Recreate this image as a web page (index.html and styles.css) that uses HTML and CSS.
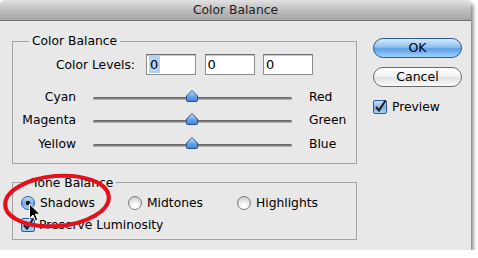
FILE: index.html
```html
<!DOCTYPE html>
<html lang="en">
<head>
  <meta charset="UTF-8">
  <title>Color Balance</title>
  <link rel="stylesheet" href="styles.css">
</head>
<body>
  <div class="window">
    <div class="titlebar">Color Balance</div>

    <div class="content">
      <div class="groups">
        <!-- Color Balance group -->
        <fieldset class="group balance">
          <legend>Color Balance</legend>
          <div class="levels">
            <span class="levels-label">Color Levels:</span>
            <span class="field"><span class="sel">0</span></span>
            <span class="field">0</span>
            <span class="field">0</span>
          </div>

          <div class="sliders">
            <div class="slider-row">
              <span class="slider-left">Cyan</span>
              <span class="track">
                <svg class="thumb" width="14" height="14" viewBox="0 0 14 14"><path d="M1.5 7 L7 1.5 L12.5 7 L12.5 11.5 Q12.5 12.5 11.5 12.5 L2.5 12.5 Q1.5 12.5 1.5 11.5 Z" fill="url(#thumbFill)" stroke="#24508f"/></svg>
              </span>
              <span class="slider-right">Red</span>
            </div>
            <div class="slider-row">
              <span class="slider-left">Magenta</span>
              <span class="track">
                <svg class="thumb" width="14" height="14" viewBox="0 0 14 14"><path d="M1.5 7 L7 1.5 L12.5 7 L12.5 11.5 Q12.5 12.5 11.5 12.5 L2.5 12.5 Q1.5 12.5 1.5 11.5 Z" fill="url(#thumbFill)" stroke="#24508f"/></svg>
              </span>
              <span class="slider-right">Green</span>
            </div>
            <div class="slider-row">
              <span class="slider-left">Yellow</span>
              <span class="track">
                <svg class="thumb" width="14" height="14" viewBox="0 0 14 14"><path d="M1.5 7 L7 1.5 L12.5 7 L12.5 11.5 Q12.5 12.5 11.5 12.5 L2.5 12.5 Q1.5 12.5 1.5 11.5 Z" fill="url(#thumbFill)" stroke="#24508f"/></svg>
              </span>
              <span class="slider-right">Blue</span>
            </div>
          </div>
        </fieldset>

        <!-- Tone Balance group -->
        <fieldset class="group tone">
          <legend>Tone Balance</legend>
          <div class="radios">
            <span class="radio-item"><span class="radio on"></span>Shadows</span>
            <span class="radio-item"><span class="radio"></span>Midtones</span>
            <span class="radio-item"><span class="radio"></span>Highlights</span>
          </div>
          <div class="check-row">
            <svg class="checkbox" width="14" height="14" viewBox="0 0 14 14"><rect x="0.5" y="0.5" width="13" height="13" rx="1.5" fill="url(#boxFill)" stroke="#2c5a96"/><path d="M3 7 L6 10.5 L12 1" fill="none" stroke="#1a1a1a" stroke-width="2"/></svg>
            <span>Preserve Luminosity</span>
          </div>
        </fieldset>
      </div>

      <div class="actions">
        <div class="btn ok">OK</div>
        <div class="btn cancel">Cancel</div>
        <div class="check-row preview">
          <svg class="checkbox" width="14" height="14" viewBox="0 0 14 14"><rect x="0.5" y="0.5" width="13" height="13" rx="1.5" fill="url(#boxFill)" stroke="#2c5a96"/><path d="M3 7 L6 10.5 L12.5 0.5" fill="none" stroke="#1a1a1a" stroke-width="2"/></svg>
          <span>Preview</span>
        </div>
      </div>
    </div>

    <!-- red annotation ring and pointer -->
    <svg class="ring" width="120" height="66" viewBox="0 0 120 66">
      <ellipse cx="57" cy="31" rx="52" ry="25" fill="none" stroke="#e6101c" stroke-width="4" transform="rotate(-5 57 31)"/>
    </svg>
    <svg class="cursor" width="14" height="20" viewBox="0 0 14 20">
      <path d="M1.5 1 L1.5 15.5 L5 12 L7.5 18 L9.8 17 L7.3 11.2 L12 11.2 Z" fill="#000" stroke="#fff" stroke-width="1"/>
    </svg>
  </div>

  <svg width="0" height="0" class="defs">
    <defs>
      <linearGradient id="thumbFill" x1="0" y1="0" x2="0" y2="1">
        <stop offset="0" stop-color="#cfe6fb"/>
        <stop offset="0.5" stop-color="#6fa9ea"/>
        <stop offset="1" stop-color="#3f84dd"/>
      </linearGradient>
      <linearGradient id="boxFill" x1="0" y1="0" x2="0" y2="1">
        <stop offset="0" stop-color="#cfe4f8"/>
        <stop offset="0.5" stop-color="#7fb2ea"/>
        <stop offset="1" stop-color="#a9d3f8"/>
      </linearGradient>
    </defs>
  </svg>
</body>
</html>
```

FILE: styles.css
```css
/* General */
body {
  margin: 0;
  background: #fff;
  font-family: 'DejaVu Sans', sans-serif;
  font-size: 12.3px;
  line-height: 16px;
  color: #000;
}

.defs {
  position: absolute;
}

.window {
  position: relative;
  width: 471px;
  height: 250px;
  background: #e8e8e8;
  border-radius: 5px 5px 0 0;
  box-shadow: 2px 3px 4px rgba(0, 0, 0, 0.55);
}

.titlebar {
  height: 20px;
  line-height: 21px;
  text-align: center;
  color: #1e1e1e;
  background: linear-gradient(#e2e2e2, #bdbdbd 50%, #a6a6a6);
  border-bottom: 1px solid #6f6f6f;
  border-radius: 5px 5px 0 0;
}

.content {
  display: flex;
  gap: 16px;
  padding-left: 12px;
}

/* Group boxes */
.groups {
  width: 345px;
}

.group {
  margin: 0;
  border: 1px solid #a2a2a2;
  min-width: 0;
}

.group legend {
  padding: 0 3px;
  margin-left: 8px;
}

.balance {
  margin-top: 12px;
  padding: 5px 8px 7px;
}

.tone {
  margin-top: 11px;
  padding: 4px 8px 6px;
}

/* Color levels */
.levels {
  display: flex;
  align-items: center;
  height: 21px;
}

.levels-label {
  width: 114px;
  text-align: right;
  margin-right: 11px;
}

.field {
  box-sizing: border-box;
  width: 50px;
  height: 21px;
  margin-right: 8.5px;
  padding: 1px 2px;
  background: #fff;
  border: 1px solid #8d8d8d;
  border-top-color: #6f6f6f;
  box-shadow: inset 0 1px 0 #c8c8c8;
  font-size: 13px;
  line-height: 17px;
}

.sel {
  display: inline-block;
  padding: 0 2px 0 1px;
  background: #b4d2f5;
}

/* Sliders */
.sliders {
  margin-top: 10px;
}

.slider-row {
  display: flex;
  align-items: center;
  height: 23.5px;
}

.slider-left {
  width: 55px;
  text-align: right;
}

.track {
  position: relative;
  width: 199px;
  height: 3px;
  margin: 3px 17px 0 17px;
  border-radius: 2px;
  background: linear-gradient(#5a5a5a, #8a8a8a 60%, #c4c4c4);
}

.thumb {
  position: absolute;
  left: 92px;
  bottom: -3px;
}

/* Radios and checks */
.radios {
  display: grid;
  grid-template-columns: 107px 109px auto;
  height: 16px;
  align-items: center;
}

.radio-item {
  display: flex;
  align-items: center;
  gap: 5px;
}

.radio {
  box-sizing: border-box;
  width: 14px;
  height: 14px;
  border-radius: 50%;
  border: 1px solid #7b7b7b;
  background: radial-gradient(circle at 50% 80%, #ffffff 20%, #e4e4e4 55%, #bdbdbd);
}

.radio.on {
  border-color: #2b5895;
  background: radial-gradient(circle, #111 0 2px, transparent 2.5px),
              linear-gradient(#c9e1f8, #6ea6e6 55%, #a8d2f6);
}

.check-row {
  display: flex;
  align-items: center;
  gap: 4px;
  height: 16px;
}

.tone .check-row {
  margin-top: 6px;
}

.checkbox {
  flex: none;
}

/* Buttons */
.actions {
  width: 89px;
  padding-top: 17px;
}

.btn {
  box-sizing: border-box;
  height: 20px;
  line-height: 18px;
  text-align: center;
  border-radius: 10px;
  font-size: 12.5px;
}

.ok {
  border: 1px solid #2a5a9a;
  background: linear-gradient(#d6eafc, #8cc0f0 45%, #5d9fe6 55%, #9fd4fa);
}

.cancel {
  margin-top: 9px;
  border: 1px solid #6a6a6a;
  background: linear-gradient(#ffffff, #f4f4f4 45%, #e2e2e2 55%, #fbfbfb);
}

.preview {
  margin-top: 12px;
  gap: 5px;
}

/* Annotation overlay */
.ring {
  position: absolute;
  left: 0;
  top: 170px;
}

.cursor {
  position: absolute;
  left: 28px;
  top: 203px;
}
```
